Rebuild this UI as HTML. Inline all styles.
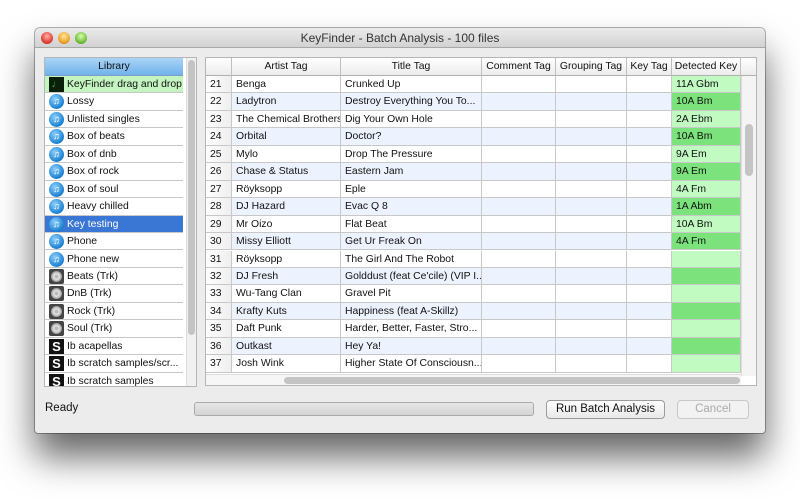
<!DOCTYPE html>
<html><head><meta charset="utf-8"><style>
*{margin:0;padding:0;box-sizing:border-box}
body{width:800px;height:500px;background:#fff;font-family:"Liberation Sans",sans-serif;font-size:10.4px;color:#111;position:relative;overflow:hidden}
.win{position:absolute;left:35px;top:28px;width:730px;height:405px;background:#ececec;border-radius:5px 5px 3px 3px;box-shadow:0 24px 36px rgba(0,0,0,.6),0 0 0 1px rgba(0,0,0,.3)}
.tb{height:20px;border-radius:5px 5px 0 0;background:linear-gradient(#ebebeb,#d2d2d2);border-bottom:1px solid #a8a8a8;text-align:center;font-size:12px;line-height:20px;color:#333}
.dot{position:absolute;top:4px;width:12px;height:12px;border-radius:50%}
.p{position:absolute;background:#fff;border:1px solid #b5b5b5}
.row{position:absolute;left:0;height:17.45px;line-height:17.5px;white-space:nowrap;overflow:hidden;border-bottom:1px solid #c8c8c8}
.li{width:138px;padding-left:22px}
.ic{position:absolute;left:4px;top:1px;width:15px;height:15px;border-radius:50%;background:radial-gradient(circle at 40% 35%,#8fd2ff,#1a7fd0 70%,#0b5aa0);color:#fff;font-size:9px;line-height:15px;text-align:center}
.ic2{position:absolute;left:4px;top:1px;width:15px;height:15px;background:#444;border-radius:2px}
.ic2:after{content:"";position:absolute;left:2px;top:2px;width:11px;height:11px;border-radius:50%;background:radial-gradient(circle,#bbb 25%,#eee 30%,#999 70%)}
.ic3{position:absolute;left:4px;top:1px;width:15px;height:15px;background:#111;color:#fff;font-weight:bold;font-size:13px;line-height:15px;text-align:center}
.c{position:absolute;top:0;height:100%;border-right:1px solid #c8c8c8;padding-left:4px;overflow:hidden}
.hd{position:absolute;top:0;height:18px;line-height:18px;text-align:center;border-right:1px solid #c0c0c0;background:linear-gradient(#fff,#ececec);border-bottom:1px solid #b0b0b0;white-space:nowrap;overflow:hidden}
.btn{position:absolute;height:19px;border:1px solid #9a9a9a;border-radius:4px;background:linear-gradient(#fff,#e8e8e8);text-align:center;line-height:17px;font-size:11.5px}
</style></head><body>
<div class="win">
<div class="tb">KeyFinder - Batch Analysis - 100 files</div>
<div class="dot" style="left:6px;background:radial-gradient(circle at 50% 35%,#ffb0a8,#e0443a 60%,#a82018)"></div>
<div class="dot" style="left:23px;background:radial-gradient(circle at 50% 35%,#ffe6a8,#f0a628 60%,#b87010)"></div>
<div class="dot" style="left:40px;background:radial-gradient(circle at 50% 35%,#d8ffb0,#78c040 60%,#3c8a18)"></div>

<div class="p" style="left:9px;top:29px;width:153px;height:330px;overflow:hidden">
<div style="position:absolute;left:0;top:0;width:138px;height:18px;background:linear-gradient(#a9d4f6,#71b2ea);text-align:center;line-height:18px;border-bottom:1px solid #7aa0c8">Library</div>
<div style="position:absolute;left:141px;top:0;width:10px;height:330px;background:#f1f1f1;border-left:1px solid #ddd"><div style="position:absolute;left:1px;top:2px;width:7px;height:275px;border-radius:4px;background:#c4c4c4"></div></div>
<div style="position:absolute;left:0;top:18px">
<div class="row li" style="top:0;background:#c4f5c0"><span class="ic3" style="background:#0a200a;color:#3c3;font-size:10px">&#9833;</span>KeyFinder drag and drop</div>
<div class="row li" style="top:17.45px"><span class="ic">&#9835;</span>Lossy</div>
<div class="row li" style="top:34.9px"><span class="ic">&#9835;</span>Unlisted singles</div>
<div class="row li" style="top:52.35px"><span class="ic">&#9835;</span>Box of beats</div>
<div class="row li" style="top:69.8px"><span class="ic">&#9835;</span>Box of dnb</div>
<div class="row li" style="top:87.25px"><span class="ic">&#9835;</span>Box of rock</div>
<div class="row li" style="top:104.7px"><span class="ic">&#9835;</span>Box of soul</div>
<div class="row li" style="top:122.15px"><span class="ic">&#9835;</span>Heavy chilled</div>
<div class="row li" style="top:139.6px;background:#3a77d4;color:#fff"><span class="ic">&#9835;</span>Key testing</div>
<div class="row li" style="top:157.05px"><span class="ic">&#9835;</span>Phone</div>
<div class="row li" style="top:174.5px"><span class="ic">&#9835;</span>Phone new</div>
<div class="row li" style="top:191.95px"><span class="ic2"></span>Beats (Trk)</div>
<div class="row li" style="top:209.4px"><span class="ic2"></span>DnB (Trk)</div>
<div class="row li" style="top:226.85px"><span class="ic2"></span>Rock (Trk)</div>
<div class="row li" style="top:244.3px"><span class="ic2"></span>Soul (Trk)</div>
<div class="row li" style="top:261.75px"><span class="ic3">S</span>Ib acapellas</div>
<div class="row li" style="top:279.2px"><span class="ic3">S</span>Ib scratch samples/scr...</div>
<div class="row li" style="top:296.65px"><span class="ic3">S</span>Ib scratch samples</div>
</div></div>

<div class="p" style="left:170px;top:29px;width:552px;height:329px;overflow:hidden">
<div class="hd" style="left:0;width:26px"></div>
<div class="hd" style="left:26px;width:109px">Artist Tag</div>
<div class="hd" style="left:135px;width:141px">Title Tag</div>
<div class="hd" style="left:276px;width:74px">Comment Tag</div>
<div class="hd" style="left:350px;width:71px">Grouping Tag</div>
<div class="hd" style="left:421px;width:45px">Key Tag</div>
<div class="hd" style="left:466px;width:69px">Detected Key</div>
<div class="hd" style="left:535px;width:17px;border-right:0"></div>
<div style="position:absolute;left:535px;top:18px;width:16px;height:300px;background:#f4f4f4;border-left:1px solid #ddd"><div style="position:absolute;left:3px;top:48px;width:8px;height:52px;border-radius:4px;background:#c4c4c4"></div></div>
<div style="position:absolute;left:0;top:316px;width:535px;height:13px;background:#f6f6f6;border-top:1px solid #ddd"><div style="position:absolute;left:78px;top:2px;width:456px;height:7px;border-radius:4px;background:#c4c4c4"></div></div>
<div style="position:absolute;left:0;top:18px;width:535px;height:298px;overflow:hidden">
<div class="row" style="top:0;width:535px;background:#fff"><div class="c" style="left:0;width:26px;background:linear-gradient(90deg,#fff,#eee)">21</div><div class="c" style="left:26px;width:109px">Benga</div><div class="c" style="left:135px;width:141px">Crunked Up</div><div class="c" style="left:276px;width:74px"></div><div class="c" style="left:350px;width:71px"></div><div class="c" style="left:421px;width:45px"></div><div class="c" style="left:466px;width:69px;background:#c2fbc2">11A Gbm</div></div>
<div class="row" style="top:17.45px;width:535px;background:#edf3fe"><div class="c" style="left:0;width:26px;background:linear-gradient(90deg,#fff,#eee)">22</div><div class="c" style="left:26px;width:109px">Ladytron</div><div class="c" style="left:135px;width:141px">Destroy Everything You To...</div><div class="c" style="left:276px;width:74px"></div><div class="c" style="left:350px;width:71px"></div><div class="c" style="left:421px;width:45px"></div><div class="c" style="left:466px;width:69px;background:#7ce37c">10A Bm</div></div>
<div class="row" style="top:34.9px;width:535px;background:#fff"><div class="c" style="left:0;width:26px;background:linear-gradient(90deg,#fff,#eee)">23</div><div class="c" style="left:26px;width:109px">The Chemical Brothers</div><div class="c" style="left:135px;width:141px">Dig Your Own Hole</div><div class="c" style="left:276px;width:74px"></div><div class="c" style="left:350px;width:71px"></div><div class="c" style="left:421px;width:45px"></div><div class="c" style="left:466px;width:69px;background:#c2fbc2">2A Ebm</div></div>
<div class="row" style="top:52.35px;width:535px;background:#edf3fe"><div class="c" style="left:0;width:26px;background:linear-gradient(90deg,#fff,#eee)">24</div><div class="c" style="left:26px;width:109px">Orbital</div><div class="c" style="left:135px;width:141px">Doctor?</div><div class="c" style="left:276px;width:74px"></div><div class="c" style="left:350px;width:71px"></div><div class="c" style="left:421px;width:45px"></div><div class="c" style="left:466px;width:69px;background:#7ce37c">10A Bm</div></div>
<div class="row" style="top:69.8px;width:535px;background:#fff"><div class="c" style="left:0;width:26px;background:linear-gradient(90deg,#fff,#eee)">25</div><div class="c" style="left:26px;width:109px">Mylo</div><div class="c" style="left:135px;width:141px">Drop The Pressure</div><div class="c" style="left:276px;width:74px"></div><div class="c" style="left:350px;width:71px"></div><div class="c" style="left:421px;width:45px"></div><div class="c" style="left:466px;width:69px;background:#c2fbc2">9A Em</div></div>
<div class="row" style="top:87.25px;width:535px;background:#edf3fe"><div class="c" style="left:0;width:26px;background:linear-gradient(90deg,#fff,#eee)">26</div><div class="c" style="left:26px;width:109px">Chase &amp; Status</div><div class="c" style="left:135px;width:141px">Eastern Jam</div><div class="c" style="left:276px;width:74px"></div><div class="c" style="left:350px;width:71px"></div><div class="c" style="left:421px;width:45px"></div><div class="c" style="left:466px;width:69px;background:#7ce37c">9A Em</div></div>
<div class="row" style="top:104.7px;width:535px;background:#fff"><div class="c" style="left:0;width:26px;background:linear-gradient(90deg,#fff,#eee)">27</div><div class="c" style="left:26px;width:109px">Röyksopp</div><div class="c" style="left:135px;width:141px">Eple</div><div class="c" style="left:276px;width:74px"></div><div class="c" style="left:350px;width:71px"></div><div class="c" style="left:421px;width:45px"></div><div class="c" style="left:466px;width:69px;background:#c2fbc2">4A Fm</div></div>
<div class="row" style="top:122.15px;width:535px;background:#edf3fe"><div class="c" style="left:0;width:26px;background:linear-gradient(90deg,#fff,#eee)">28</div><div class="c" style="left:26px;width:109px">DJ Hazard</div><div class="c" style="left:135px;width:141px">Evac Q 8</div><div class="c" style="left:276px;width:74px"></div><div class="c" style="left:350px;width:71px"></div><div class="c" style="left:421px;width:45px"></div><div class="c" style="left:466px;width:69px;background:#7ce37c">1A Abm</div></div>
<div class="row" style="top:139.6px;width:535px;background:#fff"><div class="c" style="left:0;width:26px;background:linear-gradient(90deg,#fff,#eee)">29</div><div class="c" style="left:26px;width:109px">Mr Oizo</div><div class="c" style="left:135px;width:141px">Flat Beat</div><div class="c" style="left:276px;width:74px"></div><div class="c" style="left:350px;width:71px"></div><div class="c" style="left:421px;width:45px"></div><div class="c" style="left:466px;width:69px;background:#c2fbc2">10A Bm</div></div>
<div class="row" style="top:157.05px;width:535px;background:#edf3fe"><div class="c" style="left:0;width:26px;background:linear-gradient(90deg,#fff,#eee)">30</div><div class="c" style="left:26px;width:109px">Missy Elliott</div><div class="c" style="left:135px;width:141px">Get Ur Freak On</div><div class="c" style="left:276px;width:74px"></div><div class="c" style="left:350px;width:71px"></div><div class="c" style="left:421px;width:45px"></div><div class="c" style="left:466px;width:69px;background:#7ce37c">4A Fm</div></div>
<div class="row" style="top:174.5px;width:535px;background:#fff"><div class="c" style="left:0;width:26px;background:linear-gradient(90deg,#fff,#eee)">31</div><div class="c" style="left:26px;width:109px">Röyksopp</div><div class="c" style="left:135px;width:141px">The Girl And The Robot</div><div class="c" style="left:276px;width:74px"></div><div class="c" style="left:350px;width:71px"></div><div class="c" style="left:421px;width:45px"></div><div class="c" style="left:466px;width:69px;background:#c2fbc2"></div></div>
<div class="row" style="top:191.95px;width:535px;background:#edf3fe"><div class="c" style="left:0;width:26px;background:linear-gradient(90deg,#fff,#eee)">32</div><div class="c" style="left:26px;width:109px">DJ Fresh</div><div class="c" style="left:135px;width:141px">Golddust (feat Ce'cile) (VIP I...</div><div class="c" style="left:276px;width:74px"></div><div class="c" style="left:350px;width:71px"></div><div class="c" style="left:421px;width:45px"></div><div class="c" style="left:466px;width:69px;background:#7ce37c"></div></div>
<div class="row" style="top:209.4px;width:535px;background:#fff"><div class="c" style="left:0;width:26px;background:linear-gradient(90deg,#fff,#eee)">33</div><div class="c" style="left:26px;width:109px">Wu-Tang Clan</div><div class="c" style="left:135px;width:141px">Gravel Pit</div><div class="c" style="left:276px;width:74px"></div><div class="c" style="left:350px;width:71px"></div><div class="c" style="left:421px;width:45px"></div><div class="c" style="left:466px;width:69px;background:#c2fbc2"></div></div>
<div class="row" style="top:226.85px;width:535px;background:#edf3fe"><div class="c" style="left:0;width:26px;background:linear-gradient(90deg,#fff,#eee)">34</div><div class="c" style="left:26px;width:109px">Krafty Kuts</div><div class="c" style="left:135px;width:141px">Happiness (feat A-Skillz)</div><div class="c" style="left:276px;width:74px"></div><div class="c" style="left:350px;width:71px"></div><div class="c" style="left:421px;width:45px"></div><div class="c" style="left:466px;width:69px;background:#7ce37c"></div></div>
<div class="row" style="top:244.3px;width:535px;background:#fff"><div class="c" style="left:0;width:26px;background:linear-gradient(90deg,#fff,#eee)">35</div><div class="c" style="left:26px;width:109px">Daft Punk</div><div class="c" style="left:135px;width:141px">Harder, Better, Faster, Stro...</div><div class="c" style="left:276px;width:74px"></div><div class="c" style="left:350px;width:71px"></div><div class="c" style="left:421px;width:45px"></div><div class="c" style="left:466px;width:69px;background:#c2fbc2"></div></div>
<div class="row" style="top:261.75px;width:535px;background:#edf3fe"><div class="c" style="left:0;width:26px;background:linear-gradient(90deg,#fff,#eee)">36</div><div class="c" style="left:26px;width:109px">Outkast</div><div class="c" style="left:135px;width:141px">Hey Ya!</div><div class="c" style="left:276px;width:74px"></div><div class="c" style="left:350px;width:71px"></div><div class="c" style="left:421px;width:45px"></div><div class="c" style="left:466px;width:69px;background:#7ce37c"></div></div>
<div class="row" style="top:279.2px;width:535px;background:#fff"><div class="c" style="left:0;width:26px;background:linear-gradient(90deg,#fff,#eee)">37</div><div class="c" style="left:26px;width:109px">Josh Wink</div><div class="c" style="left:135px;width:141px">Higher State Of Consciousn...</div><div class="c" style="left:276px;width:74px"></div><div class="c" style="left:350px;width:71px"></div><div class="c" style="left:421px;width:45px"></div><div class="c" style="left:466px;width:69px;background:#c2fbc2"></div></div>
</div></div>

<div style="position:absolute;left:10px;top:374px;font-size:11.5px">Ready</div>
<div style="position:absolute;left:159px;top:374px;width:340px;height:14px;border:1px solid #aaa;border-radius:3px;background:linear-gradient(#e6e6e6,#d4d4d4)"></div>
<div class="btn" style="left:511px;top:372px;width:119px">Run Batch Analysis</div>
<div class="btn" style="left:642px;top:372px;width:72px;color:#aaa;border-color:#c8c8c8;background:#f2f2f2">Cancel</div>
</div>
</body></html>
